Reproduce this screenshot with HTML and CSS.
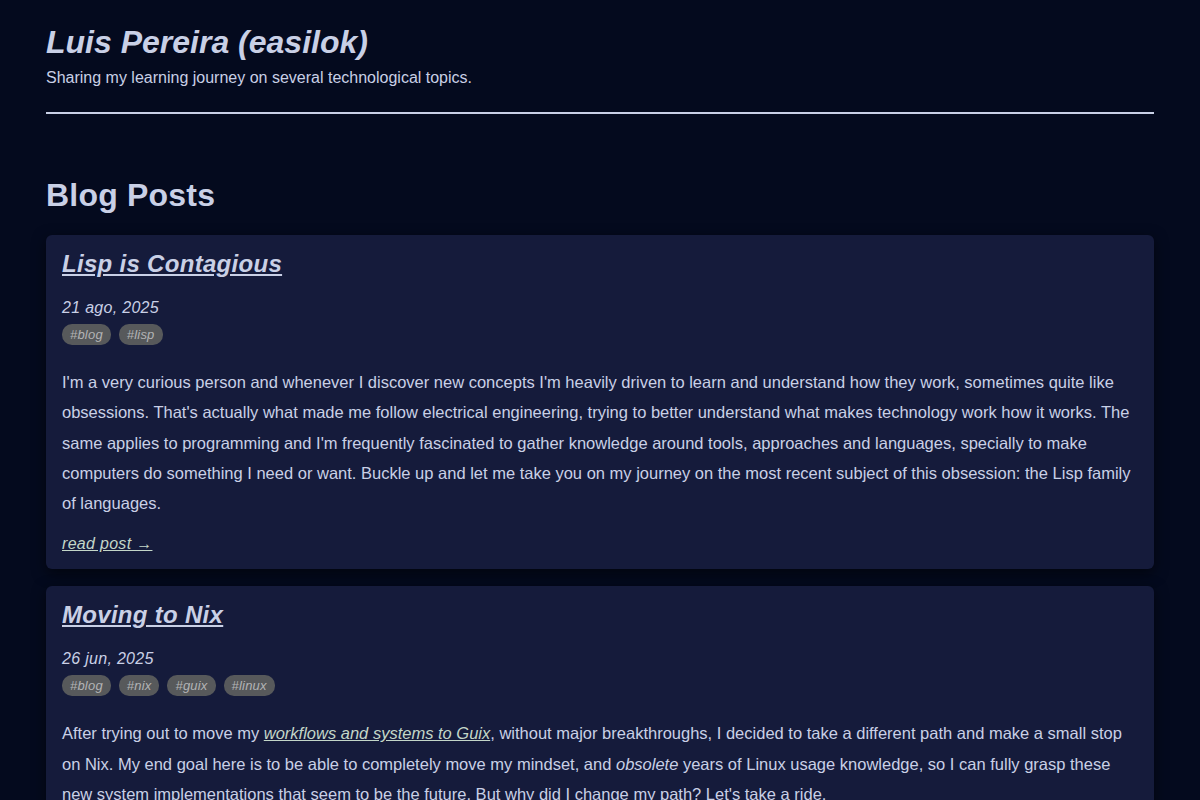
FILE: index.html
```html
<!DOCTYPE html>
<html lang="en">

<head>
  <meta charset="UTF-8">
  <meta name="viewport" content="width=device-width, initial-scale=1.0">
  <title>Luis Pereira (easilok)</title>
  <link rel="stylesheet" href="styles.css">
</head>

<body>

  <div class="container">
    <header class="site-header">
      <h1>Luis Pereira (easilok)</h1>
      <p class="subtitle">Sharing my learning journey on several technological topics.</p>
    </header>

    <main>
      <h2>Blog Posts</h2>

      <article class="post">
        <h3><a href="#">Lisp is Contagious</a></h3>
        <div class="date">21 ago, 2025</div>
        <div class="tags">
          <span class="tag">#blog</span>
          <span class="tag">#lisp</span>
        </div>
        <p>I'm a very curious person and whenever I discover new concepts I'm heavily driven to learn and understand how they work, sometimes quite like obsessions. That's actually what made me follow electrical engineering, trying to better understand what makes technology work how it works. The same applies to programming and I'm frequently fascinated to gather knowledge around tools, approaches and languages, specially to make computers do something I need or want. Buckle up and let me take you on my journey on the most recent subject of this obsession: the Lisp family of languages.</p>
        <a class="read-more" href="#">read post →</a>
      </article>

      <article class="post">
        <h3><a href="#">Moving to Nix</a></h3>
        <div class="date">26 jun, 2025</div>
        <div class="tags">
          <span class="tag">#blog</span>
          <span class="tag">#nix</span>
          <span class="tag">#guix</span>
          <span class="tag">#linux</span>
        </div>
        <p>After trying out to move my <a href="#">workflows and systems to Guix</a>, without major breakthroughs, I decided to take a different path and make a small stop on Nix. My end goal here is to be able to completely move my mindset, and <em>obsolete</em> years of Linux usage knowledge, so I can fully grasp these new system implementations that seem to be the future. But why did I change my path? Let's take a ride.</p>
        <a class="read-more" href="#">read post →</a>
      </article>
    </main>
  </div>

</body>

</html>
```

FILE: styles.css
```css
/* base */
html,
body {
  margin: 0;
  padding: 0;
}

body {
  background-color: #040a1e;
  color: #c9d0e6;
  font-family: "Liberation Sans", Arial, sans-serif;
}

.container {
  max-width: 1108px;
  margin: 0 auto;
  padding: 24px 46px;
}

.site-header {
  border-bottom: 2px solid #c9d0e6;
  padding-bottom: 24px;
}

h1 {
  font-size: 32px;
  font-style: italic;
  margin: 0 0 8px 0;
  line-height: 36px;
}

.subtitle {
  font-size: 16px;
  margin: 0;
  line-height: 20px;
}

h2 {
  font-size: 32px;
  letter-spacing: 0.2px;
  margin: 62px 0 21px 0;
  line-height: 38px;
}

/* post cards */
.post {
  background-color: #151b3b;
  border-radius: 6px;
  box-shadow: 0 4px 14px rgba(0, 0, 0, 0.55);
  padding: 14px 16px 16px 16px;
  margin-bottom: 17px;
  letter-spacing: 0.3px;
}

.post h3 {
  font-size: 24px;
  font-style: italic;
  margin: 0 0 18px 0;
  line-height: 30px;
}

.post h3 a {
  color: #c9d0e6;
}

.date {
  font-size: 16px;
  font-style: italic;
  line-height: 22px;
  margin-bottom: 5px;
}

.tags {
  display: flex;
  gap: 8px;
}

.tag {
  background-color: #57595b;
  color: #b2b3b5;
  font-size: 13px;
  font-style: italic;
  letter-spacing: 0.2px;
  padding: 3px 8px;
  border-radius: 10px;
}

.post p {
  font-size: 16.5px;
  line-height: 30.25px;
  margin: 22px 0 17px 0;
  letter-spacing: 0;
}

.post p a {
  color: #c3d6c8;
  font-style: italic;
}

.read-more {
  color: #c3d6c8;
  font-style: italic;
  font-size: 16px;
}
```
